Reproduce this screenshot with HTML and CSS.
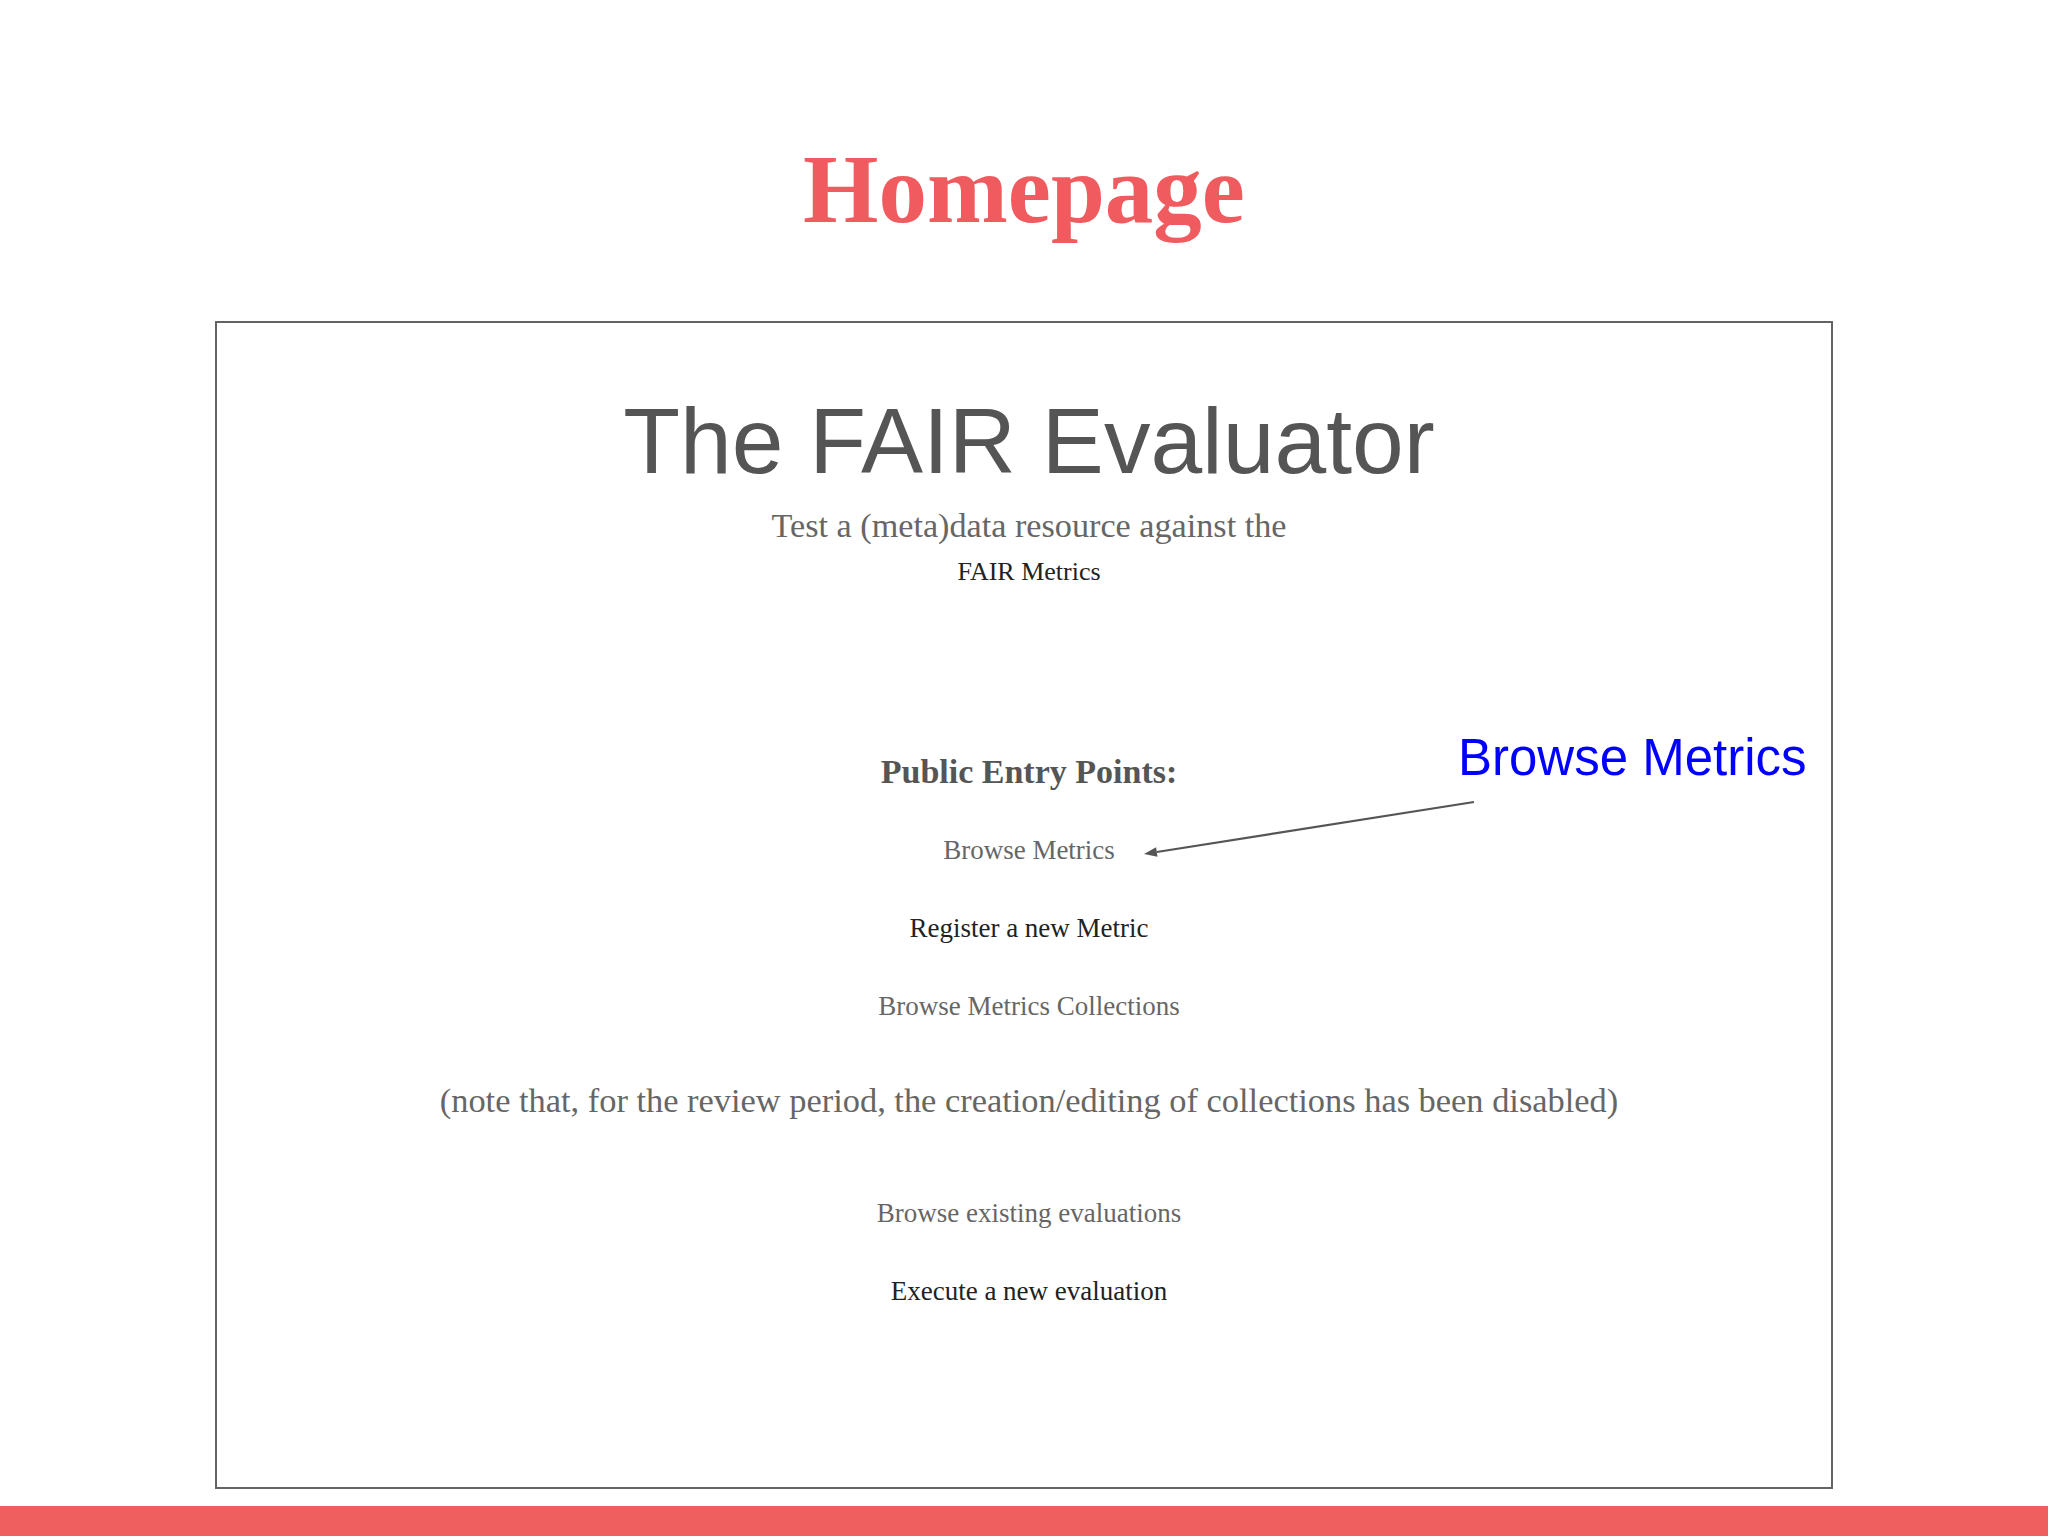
FILE: index.html
```html
<!DOCTYPE html>
<html lang="en">
<head>
<meta charset="utf-8">
<title>Homepage</title>
<link rel="stylesheet" href="styles.css">
</head>
<body>
<header class="slide-head">
  <h1 class="slide-title">Homepage</h1>
</header>
<main class="shot">
  <h2 class="app-title">The FAIR Evaluator</h2>
  <p class="tagline">Test a (meta)data resource against the</p>
  <p class="tagline-link">FAIR Metrics</p>
  <h3 class="entry-head">Public Entry Points:</h3>
  <ul class="links">
    <li class="link muted">Browse Metrics</li>
    <li class="link dark">Register a new Metric</li>
    <li class="link muted">Browse Metrics Collections</li>
  </ul>
  <p class="note">(note that, for the review period, the creation/editing of collections has been disabled)</p>
  <ul class="links links-eval">
    <li class="link muted">Browse existing evaluations</li>
    <li class="link dark">Execute a new evaluation</li>
  </ul>
  <div class="callout">Browse Metrics</div>
  <svg class="arrow" width="1614" height="1164" aria-hidden="true">
    <line x1="1257" y1="479" x2="939.8" y2="529" stroke="#555" stroke-width="2.2"/>
    <polygon points="927,531 940.5,533.8 939.1,524.2" fill="#555"/>
  </svg>
</main>
<footer class="bar"></footer>
</body>
</html>
```

FILE: styles.css
```css
html, body {
  margin: 0;
  padding: 0;
  background: #ffffff;
  overflow: hidden;
}

body {
  width: 2048px;
  height: 1536px;
  font-family: "Liberation Serif", "Times New Roman", serif;
}

.slide-head {
  padding-top: 130px;
  text-align: center;
}

.slide-title {
  margin: 0;
  font-family: "Liberation Serif", "Times New Roman", serif;
  font-weight: 700;
  font-size: 97px;
  line-height: 120px;
  color: #ef5b5e;
}

.shot {
  position: relative;
  box-sizing: border-box;
  margin: 71px 0 0 215px;
  width: 1618px;
  height: 1168px;
  border: 2px solid #636363;
  padding: 63px 0 0 10px;
  text-align: center;
  background: #ffffff;
}

.app-title {
  margin: 0;
  font-family: "Liberation Sans", Arial, sans-serif;
  font-weight: 400;
  font-size: 93px;
  line-height: 110px;
  color: #555555;
}

.tagline {
  margin: 8px 0 0;
  font-size: 34.2px;
  line-height: 44px;
  color: #666666;
}

.tagline-link {
  margin: 6px 0 0;
  font-size: 26px;
  line-height: 36px;
  color: #222222;
}

.entry-head {
  margin: 160px 0 0;
  font-size: 34px;
  line-height: 44px;
  font-weight: 700;
  color: #555555;
}

.links {
  list-style: none;
  margin: 38px 0 0;
  padding: 0;
  display: flex;
  flex-direction: column;
  align-items: center;
  gap: 42px;
}

.links-eval {
  margin-top: 73px;
}

.link {
  font-size: 27px;
  line-height: 36px;
}

.muted {
  color: #666666;
}

.dark {
  color: #222222;
}

.note {
  margin: 54px 0 0;
  font-size: 34.4px;
  line-height: 44px;
  color: #666666;
}

.callout {
  position: absolute;
  left: 1241px;
  top: 409px;
  font-family: "Liberation Sans", Arial, sans-serif;
  font-size: 51px;
  line-height: 51px;
  color: #0000ff;
  white-space: nowrap;
}

.arrow {
  position: absolute;
  left: 0;
  top: 0;
  overflow: visible;
}

.bar {
  margin-top: 17px;
  height: 30px;
  background: #ef5f5f;
}
```
